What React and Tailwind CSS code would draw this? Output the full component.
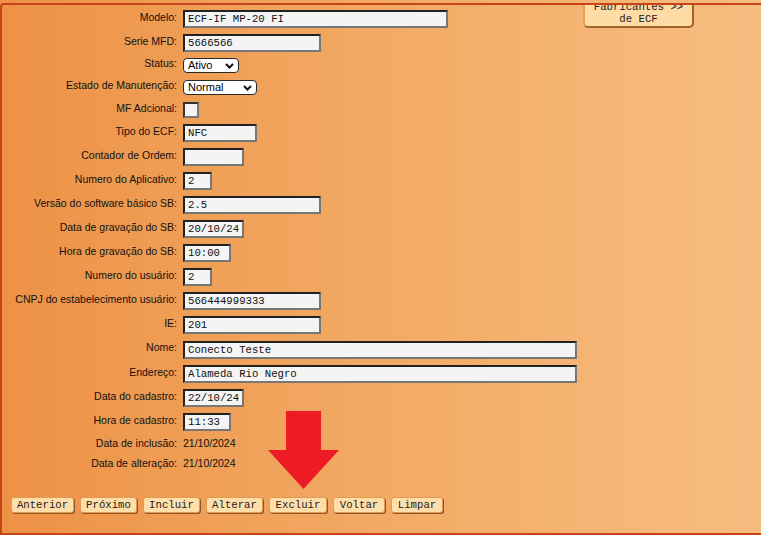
import React from "react";

const labelFont = { fontFamily: '"Liberation Sans", Arial, sans-serif' };
const monoFont = { fontFamily: '"Liberation Mono", "Courier New", monospace' };

// label column is right aligned; controls sit a touch lower than the text
const Row = ({ label, h, plain, children }) => (
  <div className={`flex items-center gap-[6px] ${h}`}>
    <span
      className={`w-[175px] shrink-0 text-right text-[10.5px] text-[#111] ${plain ? "" : "pb-[3px]"}`}
    >
      {label}
    </span>
    {children}
  </div>
);

const Field = ({ w, value }) => (
  <input
    readOnly
    value={value}
    style={monoFont}
    className={`${w} h-[18px] border-2 border-t-[#222] border-l-[#222] border-b-[#777] border-r-[#777] bg-[#f4f4f4] px-[3px] text-[10.67px] text-[#111] outline-none`}
  />
);

const Select = ({ w, value }) => (
  <div
    className={`${w} flex h-[15px] items-center justify-between rounded-[4px] border border-[#2a2a2a] bg-white pl-[4px] pr-[4px] text-[11px] leading-[13px] text-black`}
  >
    <span>{value}</span>
    <svg width="9" height="6" viewBox="0 0 9 6">
      <path d="M1 1l3.5 3.5L8 1" fill="none" stroke="#111" strokeWidth="2" />
    </svg>
  </div>
);

const NavButton = ({ w, children }) => (
  <button
    style={monoFont}
    className={`${w} h-[16px] rounded-[3px] border border-[#e09a55] bg-[#ffdeaa] text-[10.67px] leading-[13px] text-[#222] shadow-[1px_1px_0_#8d5626]`}
  >
    {children}
  </button>
);

const buttons = [
  ["Anterior", "w-[63px]"],
  ["Próximo", "w-[57px]"],
  ["Incluir", "w-[57px]"],
  ["Alterar", "w-[57px]"],
  ["Excluir", "w-[58px]"],
  ["Voltar", "w-[52px]"],
  ["Limpar", "w-[52px]"],
];

export default function App() {
  return (
    <div
      style={labelFont}
      className="relative h-[535px] w-[761px] overflow-hidden bg-linear-to-r from-[#ed9145] via-[#f2aa64] to-[#f7bd80]"
    >
      <div className="mt-[3px] h-[532px] w-[900px] overflow-hidden rounded-tl-[4px] border-b-2 border-l-2 border-t-2 border-[#c7441b] pt-[2px]">
        <div className="flex gap-[6px]">
          <div className="w-[575px] shrink-0">
            <Row label="Modelo:" h="h-[24px]">
              <Field w="w-[265px]" value="ECF-IF MP-20 FI" />
            </Row>
            <Row label="Serie MFD:" h="h-[24px]">
              <Field w="w-[138px]" value="5666566" />
            </Row>
            <Row label="Status:" h="h-[21px]">
              <Select w="w-[56px]" value="Ativo" />
            </Row>
            <Row label="Estado de Manutenção:" h="h-[23px]">
              <Select w="w-[74px]" value="Normal" />
            </Row>
            <Row label="MF Adcional:" h="h-[22px]">
              <span className="h-[16px] w-[16px] border-2 border-t-[#333] border-l-[#333] border-b-[#777] border-r-[#777] bg-[#f4f4f4]" />
            </Row>
            <Row label="Tipo do ECF:" h="h-[24px]">
              <Field w="w-[74px]" value="NFC" />
            </Row>
            <Row label="Contador de Ordem:" h="h-[24px]">
              <Field w="w-[61px]" value="" />
            </Row>
            <Row label="Numero do Aplicativo:" h="h-[24px]">
              <Field w="w-[29px]" value="2" />
            </Row>
            <Row label="Versão do software básico SB:" h="h-[24px]">
              <Field w="w-[138px]" value="2.5" />
            </Row>
            <Row label="Data de gravação do SB:" h="h-[24px]">
              <Field w="w-[61px]" value="20/10/24" />
            </Row>
            <Row label="Hora de gravação do SB:" h="h-[24px]">
              <Field w="w-[48px]" value="10:00" />
            </Row>
            <Row label="Numero do usuário:" h="h-[24px]">
              <Field w="w-[29px]" value="2" />
            </Row>
            <Row label="CNPJ do estabelecimento usuário:" h="h-[24px]">
              <Field w="w-[138px]" value="566444999333" />
            </Row>
            <Row label="IE:" h="h-[24px]">
              <Field w="w-[138px]" value="201" />
            </Row>
            <Row label="Nome:" h="h-[25px]">
              <Field w="w-[394px]" value="Conecto Teste" />
            </Row>
            <Row label="Endereço:" h="h-[24px]">
              <Field w="w-[394px]" value="Alameda Rio Negro" />
            </Row>
            <Row label="Data do cadastro:" h="h-[24px]">
              <Field w="w-[61px]" value="22/10/24" />
            </Row>
            <Row label="Hora de cadastro:" h="h-[24px]">
              <Field w="w-[48px]" value="11:33" />
            </Row>
            <Row label="Data de inclusão:" h="h-[20px]" plain>
              <span className="text-[10.5px] text-[#111]">21/10/2024</span>
            </Row>
            <Row label="Data de alteração:" h="h-[19px]" plain>
              <span className="text-[10.5px] text-[#111]">21/10/2024</span>
            </Row>

            <div className="mt-[24px] flex gap-[6px] pl-[9px]">
              {buttons.map(([b, w]) => (
                <NavButton key={b} w={w}>
                  {b}
                </NavButton>
              ))}
            </div>
          </div>

          <button
            style={monoFont}
            className="-mt-[9px] h-[30px] w-[111px] shrink-0 rounded-b-[5px] border-2 border-l-[#e9a050] border-t-[#e9a050] border-b-[#a0642c] border-r-[#a0642c] bg-[#ffdba6] text-[10.67px] leading-[12px] text-[#222]"
          >
            Fabricantes &gt;&gt;
            <br />
            de ECF
          </button>
        </div>
      </div>

      {/* red pointer over the action bar */}
      <svg
        className="absolute left-[268px] top-[411px]"
        width="72"
        height="79"
        viewBox="0 0 72 79"
      >
        <polygon points="18,0 53,0 53,39 71,39 35.5,78 0,39 18,39" fill="#ed1c24" />
      </svg>
    </div>
  );
}
